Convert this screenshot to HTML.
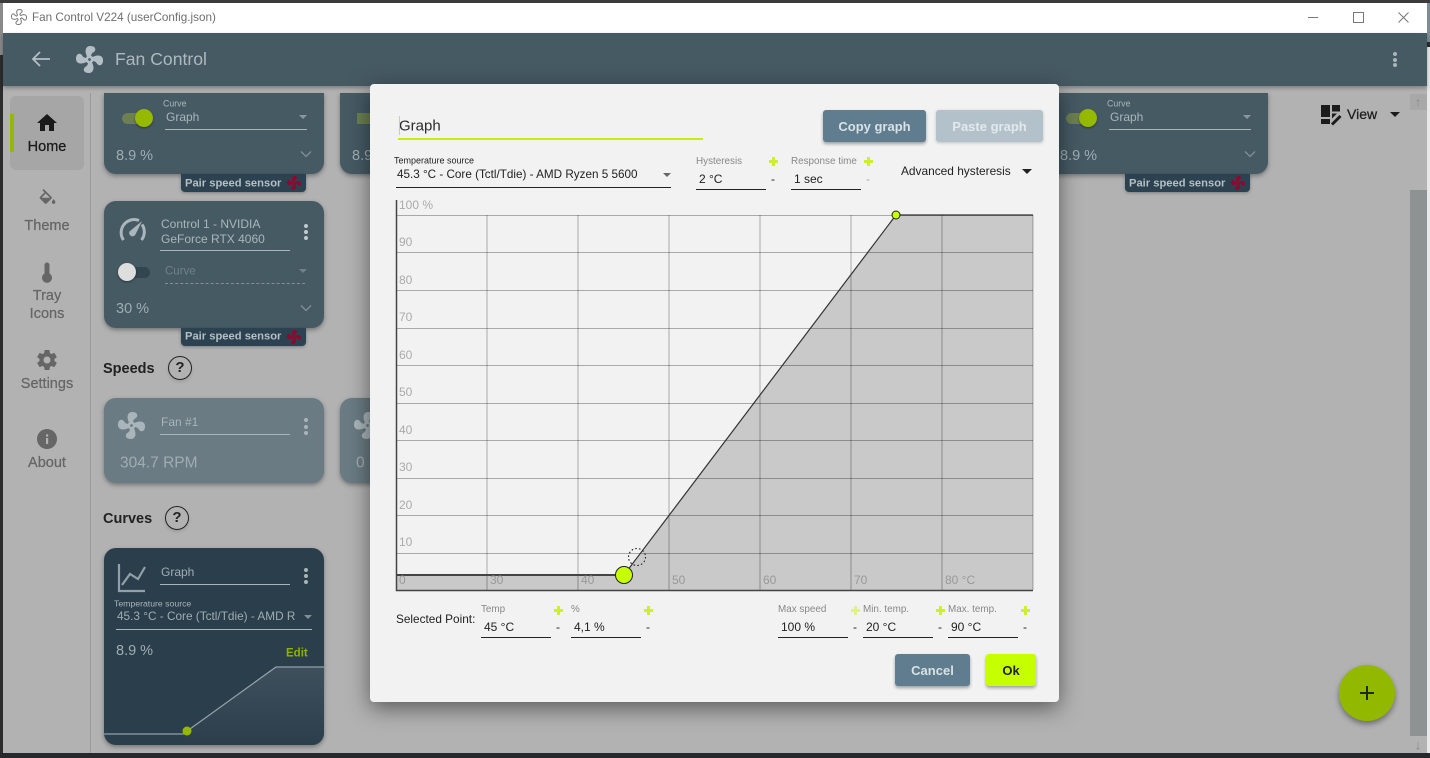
<!DOCTYPE html>
<html><head><meta charset="utf-8"><title>Fan Control</title>
<style>
html,body{margin:0;padding:0;width:1430px;height:758px;overflow:hidden;background:#e8e8e8}
body{position:relative;font-family:"Liberation Sans",sans-serif;color:#222}
.a{position:absolute}
.t{position:absolute;white-space:nowrap;line-height:1;transform:translateY(-50%)}
.c{transform:translate(-50%,-50%)}
.m{-webkit-text-stroke:.25px currentColor}
.card{position:absolute;left:104px;width:220px;background:#465a64;border-radius:12px;box-shadow:0 2px 5px rgba(0,0,0,.35)}
.tag{position:absolute;width:125px;height:18px;background:#2d4250;border-radius:0 0 4px 4px;box-shadow:0 1px 3px rgba(0,0,0,.3)}
.ln{position:absolute;height:1px}
.arr{position:absolute;width:0;height:0;border-left:4px solid transparent;border-right:4px solid transparent;border-top:4px solid #8898a0}
.lab{font-size:9.9px;color:#888}
.val{font-size:12px;color:#222}
.pl{position:absolute;width:9px;height:9px;background:linear-gradient(#cdf02a,#cdf02a) center/9px 3px no-repeat,linear-gradient(#cdf02a,#cdf02a) center/3px 9px no-repeat}
.ul{position:absolute;height:1px;background:#222;width:70px}
.btn{position:absolute;height:32px;border-radius:3px;font-weight:bold;font-size:13px;display:flex;align-items:center;justify-content:center;box-shadow:0 2px 3px rgba(0,0,0,.35)}
.dot{position:absolute;width:4px;height:4px;border-radius:50%}
.help{position:absolute;width:22px;height:22px;border:1.5px solid #222;border-radius:50%;text-align:center;line-height:22px;font-size:15px;font-weight:bold;box-shadow:0 2px 3px rgba(0,0,0,.12)}
</style></head><body>
<svg width="0" height="0" style="position:absolute"><defs>
<symbol id="fan" viewBox="2 2 20 20"><path d="M12,11A1,1 0 0,0 11,12A1,1 0 0,0 12,13A1,1 0 0,0 13,12A1,1 0 0,0 12,11M12.5,2C17,2 17.11,5.57 14.75,6.75C13.76,7.24 13.32,8.29 13.13,9.22C13.61,9.42 14.03,9.73 14.35,10.13C18.05,8.13 22.03,8.92 22.03,12.5C22.03,17 18.46,17.1 17.28,14.73C16.78,13.74 15.72,13.3 14.79,13.11C14.59,13.59 14.28,14 13.88,14.34C15.87,18.03 15.08,22 11.5,22C7,22 6.91,18.42 9.27,17.24C10.25,16.75 10.69,15.71 10.89,14.79C10.4,14.59 9.97,14.27 9.65,13.87C5.96,15.85 2,15.07 2,11.5C2,7 5.56,6.89 6.74,9.26C7.24,10.25 8.29,10.68 9.22,10.87C9.41,10.39 9.73,9.97 10.14,9.65C8.15,5.96 8.94,2 12.5,2Z" fill="currentColor" fill-rule="evenodd"/></symbol>
<symbol id="chev" viewBox="0 0 12 8"><path d="M1 1.5L6 6.5L11 1.5" fill="none" stroke="currentColor" stroke-width="1.3"/></symbol>
</defs></svg>

<!-- window frame -->
<div class="a" style="left:0;top:0;width:1430px;height:3px;background:#3b3b3b"></div>
<div class="a" style="left:0;top:55px;width:3px;height:703px;background:#2c2c2c"></div>
<div class="a" style="left:0;top:3px;width:3px;height:52px;background:#8a8a8a"></div>
<div class="a" style="left:1427px;top:3px;width:3px;height:39px;background:#7f8c95"></div>
<div class="a" style="left:1427px;top:42px;width:3px;height:5px;background:#2c2c2c"></div>
<div class="a" style="left:0;top:753px;width:1430px;height:5px;background:#26292c"></div>
<div class="a" style="left:3px;top:3px;width:1424px;height:30px;background:#fff"></div>
<svg class="a" style="left:11px;top:9px;color:#777" width="16" height="16" viewBox="2 2 20 20"><path d="M12.5,2.6C16.6,2.6 16.6,5.6 14.5,6.7C13.6,7.2 13.2,8.3 13.1,9.2C13.6,9.4 14,9.7 14.4,10.1C18,8.2 21.4,9 21.4,12.5C21.4,16.5 18.4,16.6 17.3,14.5C16.8,13.7 15.7,13.3 14.8,13.1C14.6,13.6 14.3,14 13.9,14.3C15.8,18 15,21.4 11.5,21.4C7.5,21.4 7.4,18.4 9.5,17.3C10.3,16.8 10.7,15.7 10.9,14.8C10.4,14.6 10,14.3 9.7,13.9C6,15.8 2.6,15 2.6,11.5C2.6,7.5 5.6,7.4 6.7,9.5C7.2,10.3 8.3,10.7 9.2,10.9C9.4,10.4 9.7,10 10.1,9.7C8.2,6 9,2.6 12.5,2.6Z" fill="none" stroke="currentColor" stroke-width="1.2"/></svg>
<div class="t" style="left:32px;top:18px;font-size:11.7px;color:#6f6f6f">Fan Control V224 (userConfig.json)</div>
<div class="a" style="left:1308px;top:17px;width:10px;height:1px;background:#777"></div>
<div class="a" style="left:1353px;top:12px;width:9px;height:9px;border:1px solid #777"></div>
<svg class="a" style="left:1398px;top:12px" width="11" height="11" viewBox="0 0 11 11"><path d="M0.5 0.5L10.5 10.5M10.5 0.5L0.5 10.5" stroke="#777" stroke-width="1"/></svg>

<!-- app background -->
<div class="a" style="left:3px;top:33px;width:1424px;height:720px;background:#b2b2b2"></div>
<div class="a" style="left:90px;top:93px;width:1px;height:660px;background:#9a9a9a"></div>

<!-- header -->
<div class="a" style="left:3px;top:33px;width:1424px;height:53px;background:#465a64;box-shadow:0 2px 4px rgba(0,0,0,.3)"></div>
<svg class="a" style="left:31px;top:51px" width="20" height="16" viewBox="0 0 20 16"><path d="M19 8H2M9 1L2 8L9 15" fill="none" stroke="#b4bfc5" stroke-width="1.8"/></svg>
<svg class="a" style="left:76px;top:46px;color:#b4bfc5" width="27" height="27"><use href="#fan"/></svg>
<div class="t" style="left:115px;top:60px;font-size:17.6px;color:#aeb9bf">Fan Control</div>
<div class="dot" style="left:1393px;top:52px;background:#a9b5ba"></div>
<div class="dot" style="left:1393px;top:58px;background:#a9b5ba"></div>
<div class="dot" style="left:1393px;top:63px;background:#a9b5ba"></div>

<!-- sidebar -->
<div class="a" style="left:10px;top:96px;width:74px;height:74px;background:#a6a6a6;border-radius:6px"></div>
<div class="a" style="left:10px;top:114px;width:4px;height:38px;background:#95b900"></div>
<svg class="a" style="left:35px;top:111px" width="24" height="24" viewBox="0 0 24 24"><path d="M10,20V14H14V20H19V12H22L12,3L2,12H5V20H10Z" fill="#1a1a1a"/></svg>
<div class="t c m" style="left:47px;top:147px;font-size:14.5px;color:#1a1a1a">Home</div>
<svg class="a" style="left:37px;top:189px" width="21" height="21" viewBox="0 0 24 24"><path d="M19,11.5C19,11.5 17,13.67 17,15A2,2 0 0,0 19,17A2,2 0 0,0 21,15C21,13.67 19,11.5 19,11.5M5.21,10L10,5.21L14.79,10M16.56,8.94L7.62,0L6.21,1.41L8.59,3.79L3.44,8.94C2.85,9.5 2.85,10.47 3.44,11.06L8.94,16.56C9.23,16.85 9.62,17 10,17C10.38,17 10.77,16.85 11.06,16.56L16.56,11.06C17.15,10.47 17.15,9.5 16.56,8.94Z" fill="#666"/></svg>
<div class="t c m" style="left:47px;top:226px;font-size:14.5px;color:#666">Theme</div>
<svg class="a" style="left:41px;top:262px" width="12" height="22" viewBox="0 0 12 22"><path d="M3.5 3A2.5 2.5 0 0 1 8.5 3V11.5A5 5 0 1 1 3.5 11.5Z" fill="#666"/></svg>
<div class="t c m" style="left:47px;top:296px;font-size:14.5px;color:#666">Tray</div>
<div class="t c m" style="left:47px;top:314px;font-size:14.5px;color:#666">Icons</div>
<svg class="a" style="left:35px;top:348px" width="24" height="24" viewBox="0 0 24 24"><path fill-rule="evenodd" d="M12,15.5A3.5,3.5 0 0,1 8.5,12A3.5,3.5 0 0,1 12,8.5A3.5,3.5 0 0,1 15.5,12A3.5,3.5 0 0,1 12,15.5M19.43,12.97C19.47,12.65 19.5,12.33 19.5,12C19.5,11.67 19.47,11.34 19.43,11L21.54,9.37C21.73,9.22 21.78,8.95 21.66,8.73L19.66,5.27C19.54,5.05 19.27,4.96 19.05,5.05L16.56,6.05C16.04,5.66 15.5,5.32 14.87,5.07L14.5,2.42C14.46,2.18 14.25,2 14,2H10C9.75,2 9.54,2.18 9.5,2.42L9.13,5.07C8.5,5.32 7.96,5.66 7.44,6.05L4.95,5.05C4.73,4.96 4.46,5.05 4.34,5.27L2.34,8.73C2.21,8.95 2.27,9.22 2.46,9.37L4.57,11C4.53,11.34 4.5,11.67 4.5,12C4.5,12.33 4.53,12.65 4.57,12.97L2.46,14.63C2.27,14.78 2.21,15.05 2.34,15.27L4.34,18.73C4.46,18.95 4.73,19.03 4.95,18.95L7.44,17.94C7.96,18.34 8.5,18.68 9.13,18.93L9.5,21.58C9.54,21.82 9.75,22 10,22H14C14.25,22 14.46,21.82 14.5,21.58L14.87,18.93C15.5,18.67 16.04,18.34 16.56,17.94L19.05,18.95C19.27,19.03 19.54,18.95 19.66,18.73L21.66,15.27C21.78,15.05 21.73,14.78 21.54,14.63L19.43,12.97Z" fill="#666"/></svg>
<div class="t c m" style="left:47px;top:384px;font-size:14.5px;color:#666">Settings</div>
<svg class="a" style="left:37px;top:429px" width="20" height="20" viewBox="0 0 20 20"><circle cx="10" cy="10" r="10" fill="#666"/><rect x="9" y="9" width="2.2" height="6" fill="#b2b2b2"/><rect x="9" y="5.4" width="2.2" height="2.2" fill="#b2b2b2"/></svg>
<div class="t c m" style="left:47px;top:463px;font-size:14.5px;color:#666">About</div>

<!-- Top row cards -->
<div class="card" style="top:93px;height:81px;border-radius:0 0 12px 12px"></div>
<div class="a" style="left:122px;top:113px;width:28px;height:11px;border-radius:6px;background:#6c8051"></div>
<div class="a" style="left:135px;top:109px;width:18px;height:18px;border-radius:50%;background:#95b900;box-shadow:0 1px 2px rgba(0,0,0,.4)"></div>
<div class="t" style="left:163px;top:104px;font-size:8.8px;color:#aab6bb">Curve</div>
<div class="t" style="left:166px;top:117px;font-size:12px;color:#a9b5ba">Graph</div>
<div class="ln" style="left:165px;top:129px;width:142px;background:#a9b5ba"></div>
<div class="arr" style="left:299px;top:115px"></div>
<div class="t" style="left:116px;top:156px;font-size:14.5px;color:#a0adb3">8.9 %</div>
<svg class="a" style="left:300px;top:150px;color:#7f9098" width="12" height="8"><use href="#chev"/></svg>
<div class="tag" style="left:181px;top:174px"></div>
<div class="t" style="left:185px;top:184px;font-size:11.2px;font-weight:bold;color:#b4bfc5">Pair speed sensor</div>
<svg class="a" style="left:287px;top:176px;color:#8b0a2e" width="14" height="14"><use href="#fan"/></svg>

<!-- second column -->
<div class="card" style="left:340px;top:93px;height:81px;border-radius:0 0 12px 12px"></div>
<div class="a" style="left:357px;top:113px;width:13px;height:11px;background:#6c8051"></div>
<div class="t" style="left:352px;top:156px;font-size:14.5px;color:#a0adb3">8.9 %</div>

<!-- right column -->
<div class="card" style="left:1048px;top:93px;height:81px;border-radius:0 0 12px 12px"></div>
<div class="a" style="left:1066px;top:113px;width:28px;height:11px;border-radius:6px;background:#6c8051"></div>
<div class="a" style="left:1079px;top:109px;width:18px;height:18px;border-radius:50%;background:#95b900;box-shadow:0 1px 2px rgba(0,0,0,.4)"></div>
<div class="t" style="left:1107px;top:104px;font-size:8.8px;color:#aab6bb">Curve</div>
<div class="t" style="left:1110px;top:117px;font-size:12px;color:#a9b5ba">Graph</div>
<div class="ln" style="left:1109px;top:129px;width:142px;background:#a9b5ba"></div>
<div class="arr" style="left:1243px;top:115px"></div>
<div class="t" style="left:1060px;top:156px;font-size:14.5px;color:#a0adb3">8.9 %</div>
<svg class="a" style="left:1244px;top:150px;color:#7f9098" width="12" height="8"><use href="#chev"/></svg>
<div class="tag" style="left:1125px;top:174px"></div>
<div class="t" style="left:1129px;top:184px;font-size:11.2px;font-weight:bold;color:#b4bfc5">Pair speed sensor</div>
<svg class="a" style="left:1231px;top:176px;color:#8b0a2e" width="14" height="14"><use href="#fan"/></svg>

<!-- View -->
<svg class="a" style="left:1320px;top:104px" width="22" height="22" viewBox="0 0 22 22"><path d="M1 1H10V13H1ZM12 1H20V7.5H12ZM1 15H10V20H1ZM12 9.5H17L12 14.5Z" fill="#1c1c1c"/><path d="M12 20.5L20.5 12" stroke="#1c1c1c" stroke-width="3"/></svg>
<div class="t m" style="left:1347px;top:114px;font-size:14px;color:#1c1c1c">View</div>
<div class="arr" style="left:1390px;top:112px;border-left-width:5px;border-right-width:5px;border-top:5px solid #1c1c1c"></div>

<!-- Control card -->
<div class="card" style="top:201px;height:127px"></div>
<svg class="a" style="left:118px;top:216px" width="28" height="26" viewBox="0 0 28 26"><path d="M5.5 24A13 13 0 0 1 21 4.5M24 8.5A13 13 0 0 1 23.5 24" fill="none" stroke="#aab6bb" stroke-width="3"/><path d="M24 5L17.5 18.5A3.3 3.3 0 0 1 11.5 15.5Z" fill="#aab6bb"/></svg>
<div class="t" style="left:161px;top:224px;font-size:12px;color:#aab6bb">Control 1 - NVIDIA</div>
<div class="t" style="left:161px;top:239px;font-size:12px;color:#aab6bb">GeForce RTX 4060</div>
<div class="ln" style="left:160px;top:250px;width:130px;background:#a9b5ba"></div>
<div class="dot" style="left:304px;top:224px;background:#c0c9cd"></div><div class="dot" style="left:304px;top:230px;background:#c0c9cd"></div><div class="dot" style="left:304px;top:236px;background:#c0c9cd"></div>
<div class="a" style="left:122px;top:267px;width:28px;height:11px;border-radius:6px;background:#324650"></div>
<div class="a" style="left:118px;top:263px;width:18px;height:18px;border-radius:50%;background:#dedede;box-shadow:0 1px 2px rgba(0,0,0,.4)"></div>
<div class="t" style="left:165px;top:272px;font-size:11.5px;color:#6f828c">Curve</div>
<div class="a" style="left:165px;top:283px;width:140px;border-top:1px dashed #7f9098"></div>
<div class="arr" style="left:299px;top:269px;border-top-color:#6f828c"></div>
<div class="t" style="left:116px;top:309px;font-size:14.5px;color:#a0adb3">30 %</div>
<svg class="a" style="left:300px;top:304px;color:#7f9098" width="12" height="8"><use href="#chev"/></svg>
<div class="tag" style="left:181px;top:328px"></div>
<div class="t" style="left:185px;top:337px;font-size:11.2px;font-weight:bold;color:#b4bfc5">Pair speed sensor</div>
<svg class="a" style="left:287px;top:330px;color:#8b0a2e" width="14" height="14"><use href="#fan"/></svg>

<!-- Speeds -->
<div class="t" style="left:103px;top:369px;font-size:14.5px;font-weight:bold;color:#222">Speeds</div>
<div class="help" style="left:168px;top:356px">?</div>
<div class="card" style="top:398px;height:85px;background:#6a7b83"></div>
<svg class="a" style="left:118px;top:412px;color:#a9b5ba" width="27" height="27"><use href="#fan"/></svg>
<div class="t" style="left:161px;top:422px;font-size:12px;color:#a9b5ba">Fan #1</div>
<div class="ln" style="left:160px;top:434px;width:130px;background:#a9b5ba"></div>
<div class="dot" style="left:304px;top:418px;background:#a9b5ba"></div><div class="dot" style="left:304px;top:425px;background:#a9b5ba"></div><div class="dot" style="left:304px;top:431px;background:#a9b5ba"></div>
<div class="t" style="left:120px;top:463px;font-size:15.5px;color:#a0adb3">304.7 RPM</div>
<div class="card" style="left:340px;top:398px;height:85px;background:#6a7b83"></div>
<svg class="a" style="left:354px;top:412px;color:#a9b5ba" width="27" height="27"><use href="#fan"/></svg>
<div class="t" style="left:356px;top:463px;font-size:15.5px;color:#a0adb3">0</div>

<!-- Curves -->
<div class="t" style="left:103px;top:519px;font-size:14.5px;font-weight:bold;color:#222">Curves</div>
<div class="help" style="left:165px;top:506px">?</div>
<div class="card" style="top:548px;height:197px;background:#2b3e4c;overflow:hidden">
<svg class="a" style="left:0;top:0" width="220" height="197" viewBox="0 0 220 197"><defs><linearGradient id="g" x1="0" y1="0" x2="0" y2="1"><stop offset="0" stop-color="#3e505c"/><stop offset="1" stop-color="#2b3e4c"/></linearGradient></defs>
<path d="M79 186L172 119H220V197H79Z" fill="url(#g)"/>
<path d="M0 186H79L172 119H220" fill="none" stroke="#93a0a8" stroke-width="1.3"/>
<circle cx="83" cy="183" r="4.5" fill="#95b900"/>
<path d="M15 16V43H41M18 37L26 26L34 31L41 19" fill="none" stroke="#93a0a8" stroke-width="2.2"/></svg>
</div>
<div class="t" style="left:161px;top:572px;font-size:12px;color:#a0adb3">Graph</div>
<div class="ln" style="left:160px;top:584px;width:130px;background:#a9b5ba"></div>
<div class="dot" style="left:304px;top:568px;background:#a9b5ba"></div><div class="dot" style="left:304px;top:574px;background:#a9b5ba"></div><div class="dot" style="left:304px;top:580px;background:#a9b5ba"></div>
<div class="t" style="left:114px;top:604px;font-size:8.7px;color:#a9b5ba">Temperature source</div>
<div class="t" style="left:117px;top:617px;font-size:11.8px;color:#a0adb3">45.3 °C - Core (Tctl/Tdie) - AMD R</div>
<div class="arr" style="left:304px;top:615px;border-top-color:#7f9098"></div>
<div class="ln" style="left:116px;top:629px;width:196px;background:#a9b5ba"></div>
<div class="t" style="left:116px;top:651px;font-size:14.5px;color:#a0adb3">8.9 %</div>
<div class="t" style="left:286px;top:654px;font-size:11.5px;font-weight:bold;color:#8fb000">Edit</div>

<!-- scrollbar -->
<div class="a" style="left:1410px;top:93px;width:17px;height:660px;background:#b2b2b2"></div>
<div class="a" style="left:1410px;top:190px;width:17px;height:546px;background:#8f9292"></div>
<div class="a" style="left:1410px;top:94px;width:17px;height:16px;background:#a8a8a8"></div>
<div class="t c" style="left:1418px;top:102px;font-size:13px;font-weight:bold;color:#8a8a8a">↑</div>
<div class="t c" style="left:1418px;top:745px;font-size:13px;font-weight:bold;color:#8a8a8a">↓</div>

<!-- FAB -->
<div class="a" style="left:1339px;top:665px;width:56px;height:56px;border-radius:50%;background:#93b800;box-shadow:0 3px 6px rgba(0,0,0,.4)"></div>
<div class="a" style="left:1360px;top:692px;width:14px;height:2px;background:#1c2a05"></div>
<div class="a" style="left:1366px;top:686px;width:2px;height:14px;background:#1c2a05"></div>

<!-- Modal -->
<div class="a" style="left:370px;top:84px;width:689px;height:618px;background:#f2f2f2;border-radius:4px;box-shadow:0 6px 22px rgba(0,0,0,.5)"></div>
<div class="t" style="left:399px;top:126px;font-size:15px;color:#2a2a2a">Graph</div>
<div class="a" style="left:399px;top:116px;width:1px;height:19px;background:#c6f000"></div>
<div class="a" style="left:398px;top:138px;width:305px;height:2px;background:#c6f000"></div>
<div class="btn" style="left:823px;top:110px;width:103px;background:#5f7d8e;color:#d8e2e7">Copy graph</div>
<div class="btn" style="left:936px;top:110px;width:107px;background:#b3c2ca;color:#e2e8eb;box-shadow:0 1px 3px rgba(0,0,0,.2)">Paste graph</div>

<div class="t" style="left:394px;top:161px;font-size:9px;color:#222">Temperature source</div>
<div class="t" style="left:397px;top:175px;font-size:11.7px;color:#222">45.3 °C - Core (Tctl/Tdie) - AMD Ryzen 5 5600</div>
<div class="arr" style="left:663px;top:173px;border-top-color:#666"></div>
<div class="ul" style="left:396px;top:187px;width:275px"></div>
<div class="t lab" style="left:696px;top:162px">Hysteresis</div>
<div class="pl" style="left:769px;top:157px"></div>
<div class="t val" style="left:699px;top:179px">2 °C</div>
<div class="ul" style="left:696px;top:189px"></div>
<div class="t val" style="left:771px;top:179px">-</div>
<div class="t lab" style="left:791px;top:162px">Response time</div>
<div class="pl" style="left:864px;top:157px"></div>
<div class="t val" style="left:794px;top:179px">1 sec</div>
<div class="ul" style="left:791px;top:189px"></div>
<div class="t val" style="left:866px;top:179px;color:#aaa">-</div>
<div class="t val" style="left:901px;top:172px;font-size:11.9px">Advanced hysteresis</div>
<div class="arr" style="left:1022px;top:169px;border-left-width:5px;border-right-width:5px;border-top:5px solid #222"></div>

<!-- Graph -->
<svg class="a" style="left:390px;top:195px" width="650" height="400" viewBox="390 195 650 400" font-family="Liberation Sans, sans-serif">
<path d="M396 575H624L896 215H1033V590H396Z" fill="#c9c9c9"/>
<g stroke="#000" stroke-opacity=".3" stroke-width="1" fill="none">
<path d="M487 215V590M578 215V590M669 215V590M760 215V590M851 215V590M942 215V590M1033 215V590"/>
<path d="M396 215.5H1033M396 252.5H1033M396 290.5H1033M396 328.5H1033M396 365.5H1033M396 403.5H1033M396 440.5H1033M396 478.5H1033M396 515.5H1033M396 553.5H1033"/>
</g>
<path d="M396.5 200V590.5H1033" fill="none" stroke="#444" stroke-width="1.5"/>
<path d="M896 215H1033" fill="none" stroke="#333" stroke-width="1.2"/>
<path d="M396 575H624" fill="none" stroke="#444" stroke-width="2"/>
<path d="M624 575L896 215" fill="none" stroke="#333" stroke-width="1.2"/>
<g font-size="12" fill="#aaa">
<text x="399" y="209">100 %</text><text x="399" y="246">90</text><text x="399" y="284">80</text><text x="399" y="321">70</text><text x="399" y="359">60</text><text x="399" y="396">50</text><text x="399" y="434">40</text><text x="399" y="471">30</text><text x="399" y="509">20</text><text x="399" y="546">10</text>
</g>
<g font-size="12" fill="#999">
<text x="399" y="584">0</text><text x="490" y="584">30</text><text x="581" y="584">40</text><text x="672" y="584">50</text><text x="763" y="584">60</text><text x="854" y="584">70</text><text x="945" y="584">80 °C</text>
</g>
<circle cx="637" cy="557" r="8.5" fill="none" stroke="#222" stroke-width="1.1" stroke-dasharray="1.6 2.2"/>
<circle cx="624" cy="575" r="8.5" fill="#c6ff00" stroke="#222" stroke-width="1"/>
<circle cx="896" cy="215" r="4" fill="#c6ff00" stroke="#222" stroke-width="1"/>
</svg>

<!-- Bottom fields -->
<div class="t val" style="left:396px;top:620px;font-size:11.8px">Selected Point:</div>
<div class="t lab" style="left:481px;top:610px">Temp</div>
<div class="pl" style="left:554px;top:606px"></div>
<div class="t val" style="left:484px;top:627px">45 °C</div>
<div class="ul" style="left:481px;top:637px"></div>
<div class="t val" style="left:556px;top:627px">-</div>
<div class="t lab" style="left:571px;top:610px">%</div>
<div class="pl" style="left:644px;top:606px"></div>
<div class="t val" style="left:574px;top:627px">4,1 %</div>
<div class="ul" style="left:571px;top:637px"></div>
<div class="t val" style="left:646px;top:627px">-</div>
<div class="t lab" style="left:778px;top:610px">Max speed</div>
<div class="pl" style="left:851px;top:606px;opacity:.5"></div>
<div class="t val" style="left:781px;top:627px">100 %</div>
<div class="ul" style="left:778px;top:637px"></div>
<div class="t val" style="left:853px;top:627px">-</div>
<div class="t lab" style="left:863px;top:610px">Min. temp.</div>
<div class="pl" style="left:936px;top:606px"></div>
<div class="t val" style="left:866px;top:627px">20 °C</div>
<div class="ul" style="left:863px;top:637px"></div>
<div class="t val" style="left:938px;top:627px">-</div>
<div class="t lab" style="left:948px;top:610px">Max. temp.</div>
<div class="pl" style="left:1021px;top:606px"></div>
<div class="t val" style="left:951px;top:627px">90 °C</div>
<div class="ul" style="left:948px;top:637px"></div>
<div class="t val" style="left:1023px;top:627px">-</div>

<div class="btn" style="left:895px;top:654px;width:75px;background:#5f7d8e;color:#d8e2e7">Cancel</div>
<div class="btn" style="left:986px;top:654px;width:50px;background:#c6ff00;color:#222">Ok</div>
</body></html>
